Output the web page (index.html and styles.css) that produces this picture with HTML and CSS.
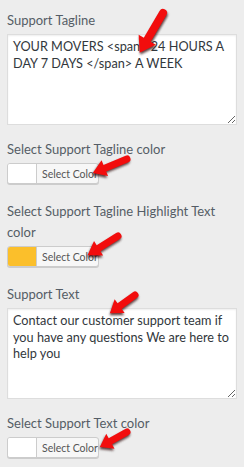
FILE: index.html
```html
<!DOCTYPE html>
<html lang="en">
<head>
    <meta charset="UTF-8">
    <meta name="viewport" content="width=device-width, initial-scale=1.0">
    <title>Support Options</title>
    <link rel="stylesheet" href="styles.css">
</head>
<body>
    <div class="options">
        <div class="field field-text">
            <label class="field-label">Support Tagline</label>
            <textarea class="field-input">YOUR MOVERS &lt;span&gt; 24 HOURS A DAY 7 DAYS &lt;/span&gt; A WEEK</textarea>
        </div>

        <div class="field field-color">
            <label class="field-label">Select Support Tagline color</label>
            <button class="color-result">
                <span class="color-swatch"></span>
                <span class="color-text">Select Color</span>
            </button>
        </div>

        <div class="field field-color">
            <label class="field-label">Select Support Tagline Highlight Text color</label>
            <button class="color-result">
                <span class="color-swatch" style="background: #fbbf2b;"></span>
                <span class="color-text">Select Color</span>
            </button>
        </div>

        <div class="field field-text">
            <label class="field-label">Support Text</label>
            <textarea class="field-input">Contact our customer support team if you have any questions We are here to help you</textarea>
        </div>

        <div class="field field-color">
            <label class="field-label">Select Support Text color</label>
            <button class="color-result">
                <span class="color-swatch"></span>
                <span class="color-text">Select Color</span>
            </button>
        </div>
    </div>

    <!-- red pointer arrows drawn on top of the screenshot -->
    <svg class="arrows" width="244" height="467" viewBox="0 0 244 467">
        <defs>
            <filter id="soft" x="-20%" y="-20%" width="140%" height="140%">
                <feGaussianBlur stdDeviation="0.8"/>
            </filter>
        </defs>
        <g transform="translate(163 13) rotate(120.5)">
            <path class="arrow-shadow" transform="translate(1.5 -1.5)" d="M0,-4 L31,-4 L31,-10 L46,0 L31,10 L31,4 L0,4 A4,4 0 0 1 0,-4 Z"/>
            <path class="arrow" d="M0,-4 L31,-4 L31,-10 L46,0 L31,10 L31,4 L0,4 A4,4 0 0 1 0,-4 Z"/>
        </g>
        <g transform="translate(127 159) rotate(157.6)">
            <path class="arrow-shadow" transform="translate(1.5 -1.5)" d="M0,-3.5 L24,-3.5 L24,-8.5 L37,0 L24,8.5 L24,3.5 L0,3.5 A3.5,3.5 0 0 1 0,-3.5 Z"/>
            <path class="arrow" d="M0,-3.5 L24,-3.5 L24,-8.5 L37,0 L24,8.5 L24,3.5 L0,3.5 A3.5,3.5 0 0 1 0,-3.5 Z"/>
        </g>
        <g transform="translate(118 236) rotate(147.7)">
            <path class="arrow-shadow" transform="translate(1.5 -1.5)" d="M0,-3.5 L23,-3.5 L23,-8.5 L36,0 L23,8.5 L23,3.5 L0,3.5 A3.5,3.5 0 0 1 0,-3.5 Z"/>
            <path class="arrow" d="M0,-3.5 L23,-3.5 L23,-8.5 L36,0 L23,8.5 L23,3.5 L0,3.5 A3.5,3.5 0 0 1 0,-3.5 Z"/>
        </g>
        <g transform="translate(135 295) rotate(144)">
            <path class="arrow-shadow" transform="translate(1.5 -1.5)" d="M0,-3.5 L19,-3.5 L19,-8.5 L31,0 L19,8.5 L19,3.5 L0,3.5 A3.5,3.5 0 0 1 0,-3.5 Z"/>
            <path class="arrow" d="M0,-3.5 L19,-3.5 L19,-8.5 L31,0 L19,8.5 L19,3.5 L0,3.5 A3.5,3.5 0 0 1 0,-3.5 Z"/>
        </g>
        <g transform="translate(127 432) rotate(151)">
            <path class="arrow-shadow" transform="translate(1.5 -1.5)" d="M0,-3.5 L19,-3.5 L19,-8.5 L31,0 L19,8.5 L19,3.5 L0,3.5 A3.5,3.5 0 0 1 0,-3.5 Z"/>
            <path class="arrow" d="M0,-3.5 L19,-3.5 L19,-8.5 L31,0 L19,8.5 L19,3.5 L0,3.5 A3.5,3.5 0 0 1 0,-3.5 Z"/>
        </g>
    </svg>
</body>
</html>
```

FILE: styles.css
```css
body {
    margin: 0;
    background: #ededed;
    font-family: 'Lato', 'Open Sans', sans-serif;
    color: #50575e;
}

.options {
    padding: 10px 7px 0;
}

.field-label {
    display: block;
    font-size: 13px;
    line-height: 21px;
    margin-bottom: 3px;
    color: #555d66;
}

.field-text {
    margin-bottom: 14px;
}

.field-color {
    margin-bottom: 17px;
}

.field-input {
    display: block;
    box-sizing: border-box;
    width: 230px;
    height: 91px;
    margin: 0;
    padding: 3px 5px;
    border: 1px solid #dddddd;
    background: #ffffff;
    box-shadow: inset 0 1px 2px rgba(0, 0, 0, 0.07);
    font-family: 'Lato', 'Open Sans', sans-serif;
    font-size: 12.7px;
    line-height: 16.5px;
    color: #32373c;
}

.color-result {
    display: flex;
    align-items: stretch;
    height: 21px;
    width: 92px;
    margin: 0;
    padding: 0;
    border: 1px solid #cccccc;
    border-radius: 3px;
    background: #f7f7f7;
    box-shadow: 0 1px 0 #cccccc;
    overflow: hidden;
    cursor: pointer;
}

.color-swatch {
    width: 28px;
    flex: none;
    background: #ffffff;
}

.color-text {
    flex: 1;
    display: flex;
    align-items: center;
    padding-left: 5px;
    border-left: 1px solid #cccccc;
    font-family: 'Lato', 'Open Sans', sans-serif;
    font-size: 10.5px;
    white-space: nowrap;
    color: #555555;
}

.arrows {
    position: absolute;
    top: 0;
    left: 0;
    pointer-events: none;
}

.arrow {
    fill: #f20d0d;
}

.arrow-shadow {
    fill: rgba(40, 0, 0, 0.75);
    filter: url(#soft);
}
```
